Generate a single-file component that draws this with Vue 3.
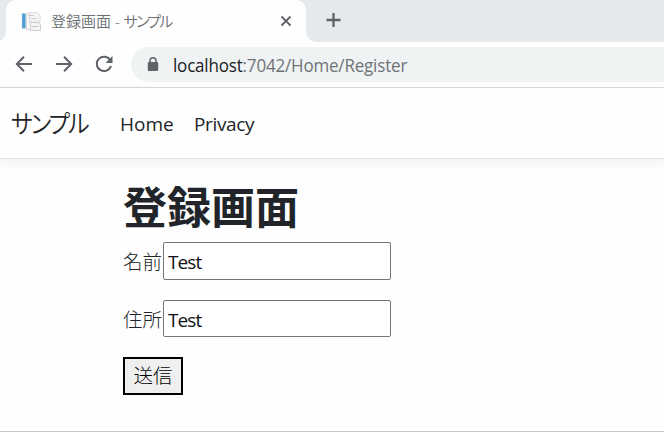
<script setup>
import { ref } from 'vue'

const name = ref('Test')
const address = ref('Test')
</script>

<template>
  <div class="window">
    <div class="tabstrip">
      <div class="tab">
        <svg class="favicon" width="20" height="20" viewBox="0 0 20 20">
          <rect x="0.500" y="2" width="5" height="16" fill="#d8eaf5" />
          <rect x="1.200" y="2.600" width="3.200" height="14.600" fill="#4c9bd0" />
          <path d="M5.500 2.500h9l3 3V18.500h-12z" fill="#f7f7f7" stroke="#dadada" />
          <path d="M8.500 1.500h8l2.500 2.500V11H8.500z" fill="#f5f5f5" stroke="#dcdcdc" />
          <path d="M7 4.500h6M10 7.500h6" stroke="#cdcdcd" />
          <path d="M9.500 11.500h7l3 2v6h-10z" fill="#f4f4f4" stroke="#d0d0d0" />
          <path d="M11 15.500h7" stroke="#c6c6c6" />
        </svg>
        <span class="tab-title">登録画面 - <span class="tab-kana">サンプル</span></span>
        <svg class="close" width="12" height="12" viewBox="0 0 12 12"><path d="M1.500 1.500l9 9M10.500 1.500l-9 9" stroke="#5f6368" stroke-width="1.800" /></svg>
      </div>
      <svg class="plus" width="16" height="16" viewBox="0 0 16 16"><path d="M7.500 1v14M.5 8h14" stroke="#5f6368" stroke-width="2.300" /></svg>
    </div>
    <div class="toolbar">
      <svg class="tool" width="18" height="18" viewBox="0 0 18 18"><path d="M17 9H2M9 1.800L1.800 9 9 16.200" fill="none" stroke="#5f6368" stroke-width="2" /></svg>
      <svg class="tool" width="18" height="18" viewBox="0 0 18 18"><path d="M1 9h15M9 1.800L16.200 9 9 16.200" fill="none" stroke="#5f6368" stroke-width="2" /></svg>
      <svg class="tool" width="18" height="18" viewBox="0 0 18 18"><path d="M15.300 5.300A7.200 7.200 0 1 0 15.900 11" fill="none" stroke="#5f6368" stroke-width="2" /><path d="M17.500 1v7h-7z" fill="#5f6368" /></svg>
      <div class="address">
        <svg class="lock" width="12" height="16" viewBox="0 0 12 16"><path d="M3 7V4.700a3 3 0 0 1 6 0V7" fill="none" stroke="#5f6368" stroke-width="1.600" /><rect x=".8" y="6" width="10.400" height="9" rx="1.300" fill="#5f6368" /></svg>
        <span class="url"><span class="host">localhost</span>:7042/Home/Register</span>
      </div>
    </div>
    <nav class="navbar">
      <a class="brand"><span class="brand-name">サンプル</span></a>
      <a class="link home">Home</a>
      <a class="link privacy">Privacy</a>
    </nav>
    <main class="content">
      <h1>登録画面</h1>
      <form @submit.prevent>
        <div class="field"><label for="name">名前</label><input id="name" v-model="name" type="text"></div>
        <div class="field"><label for="address">住所</label><input id="address" v-model="address" class="short" type="text"></div>
        <button type="submit">送信</button>
      </form>
    </main>
  </div>
</template>

<style>
body { margin: 0; background: #fefefe; }
</style>

<style scoped>
* { box-sizing: border-box; }
.window {
  display: flex;
  flex-direction: column;
  width: 664px;
  height: 432px;
  overflow: hidden;
  background: #fefefe;
  border-bottom: 1px solid #c8c8c8;
  font-family: "Open Sans", "Noto Sans CJK JP", sans-serif;
  color: #212529;
}
.tabstrip { display: flex; height: 42px; background: #e5e9ec; }
.tab {
  position: relative;
  display: flex;
  align-items: center;
  width: 300px;
  height: 42px;
  margin-left: 6px;
  padding: 0 15px;
  border-radius: 10px 10px 0 0;
  background: #fefefe;
}
.tab::before, .tab::after {
  content: "";
  position: absolute;
  bottom: 0;
  width: 10px;
  height: 10px;
}
.tab::before { left: -10px; background: radial-gradient(circle at 0 0, transparent 9.5px, #fefefe 10px); }
.tab::after { right: -10px; background: radial-gradient(circle at 100% 0, transparent 9.5px, #fefefe 10px); }
.favicon { flex: none; }
.tab-title {
  margin-left: 10px;
  font-size: 15px;
  font-weight: 350;
  line-height: 20px;
  color: #6b6f73;
  white-space: nowrap;
}
.tab-kana { font-feature-settings: "palt"; letter-spacing: -1.7px; }
.close { margin-left: auto; margin-right: -1px; }
.plus { margin: 12px 0 0 20px; }
.toolbar {
  display: flex;
  align-items: center;
  height: 46px;
  padding-left: 14.5px;
  padding-bottom: 1px;
  border-bottom: 1px solid #d6d8da;
}
.tool { flex: none; margin-right: 22px; }
.address {
  display: flex;
  align-items: center;
  flex: 1;
  height: 35px;
  margin-left: -3.5px;
  padding-left: 16px;
  border-radius: 18px 0 0 18px;
  background: #eff3f4;
}
.url {
  margin-left: 14px;
  padding-top: 1px;
  font-size: 18px;
  line-height: 24px;
  letter-spacing: -0.2px;
  color: #707376;
  transform: scaleX(0.945);
  transform-origin: 0 50%;
}
.host { color: #202124; }
.navbar {
  display: flex;
  align-items: center;
  height: 71px;
  padding-left: 11px;
  border-bottom: 1px solid #dee2e6;
  box-shadow: 0 4px 12px rgba(0, 0, 0, 0.05);
}
.brand { width: 109px; font-size: 25px; line-height: 38px; font-weight: 350; white-space: nowrap; }
.brand-name {
  display: inline-block;
  font-feature-settings: "palt";
  letter-spacing: -2px;
  transform: scaleX(0.92);
  transform-origin: 0 50%;
}
.link { padding-top: 2px; font-size: 19px; line-height: 30px; }
.home { width: 74px; }
.privacy { letter-spacing: -0.35px; }
.content { padding: 22px 0 0 123px; }
h1 { margin: 0; font-size: 44px; line-height: 53px; font-weight: 700; }
form { display: flex; flex-direction: column; align-items: flex-start; margin-top: 8px; }
.field { display: flex; align-items: center; margin-bottom: 20px; }
label { width: 40px; padding-top: 2px; font-size: 19.500px; line-height: 30px; font-weight: 300; }
input {
  width: 228px;
  height: 38px;
  padding: 3px 4px 1px;
  border: 1px solid #767676;
  border-radius: 2px;
  background: #fff;
  font-family: inherit;
  font-size: 19px;
  letter-spacing: -0.9px;
  color: #111;
  outline: none;
}
.short { height: 37px; }
button {
  width: 60px;
  height: 38px;
  padding: 0;
  border: 2px solid #000;
  background: #efefef;
  font-family: inherit;
  font-size: 19.500px;
  font-weight: 300;
  line-height: 30px;
  color: #000;
}
</style>
